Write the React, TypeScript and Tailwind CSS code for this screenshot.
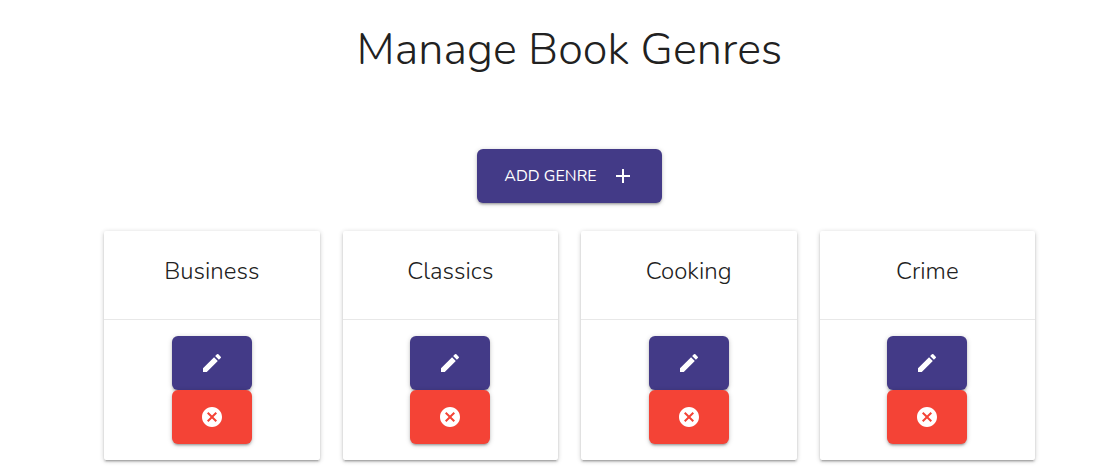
import { MdAdd, MdCancel, MdEdit } from "react-icons/md";

const genres = ["Business", "Classics", "Cooking", "Crime"];

const raised =
  "shadow-[0_2px_2px_0_rgba(0,0,0,0.14),0_3px_1px_-2px_rgba(0,0,0,0.12),0_1px_5px_0_rgba(0,0,0,0.2)]";

function GenreCard({ name }: { name: string }) {
  return (
    <article className={`rounded-xs bg-white ${raised}`}>
      <div className="px-6 pt-6 pb-8">
        <h2 className="text-center text-2xl leading-8 font-light">{name}</h2>
      </div>
      <div className="flex flex-col items-center border-t border-[#e8e8e8] p-4">
        <button
          type="button"
          aria-label={`Edit ${name}`}
          className={`flex h-[54px] w-20 items-center justify-center rounded-md bg-[#433a87] text-white ${raised}`}
        >
          <MdEdit size={24} />
        </button>
        <button
          type="button"
          aria-label={`Delete ${name}`}
          className={`flex h-[54px] w-20 items-center justify-center rounded-md bg-[#f44336] text-white ${raised}`}
        >
          <MdCancel size={24} />
        </button>
      </div>
    </article>
  );
}

export default function App() {
  return (
    <main className="bg-white pt-[22px] pr-[62px] pb-3 pl-[104px] font-['Nunito','Open_Sans',sans-serif] text-[#212121]">
      <h1 className="text-center text-[45px] leading-[56px] font-[350]">Manage Book Genres</h1>
      <div className="mt-[71px] flex justify-center">
        <button
          type="button"
          className={`flex h-[54px] items-center gap-[14px] rounded-md bg-[#433a87] px-[27px] text-base text-white uppercase ${raised}`}
        >
          Add Genre
          <MdAdd size={24} />
        </button>
      </div>
      <section className="mt-7 grid grid-cols-4 gap-[23px]">
        {genres.map((name) => (
          <GenreCard key={name} name={name} />
        ))}
      </section>
    </main>
  );
}
